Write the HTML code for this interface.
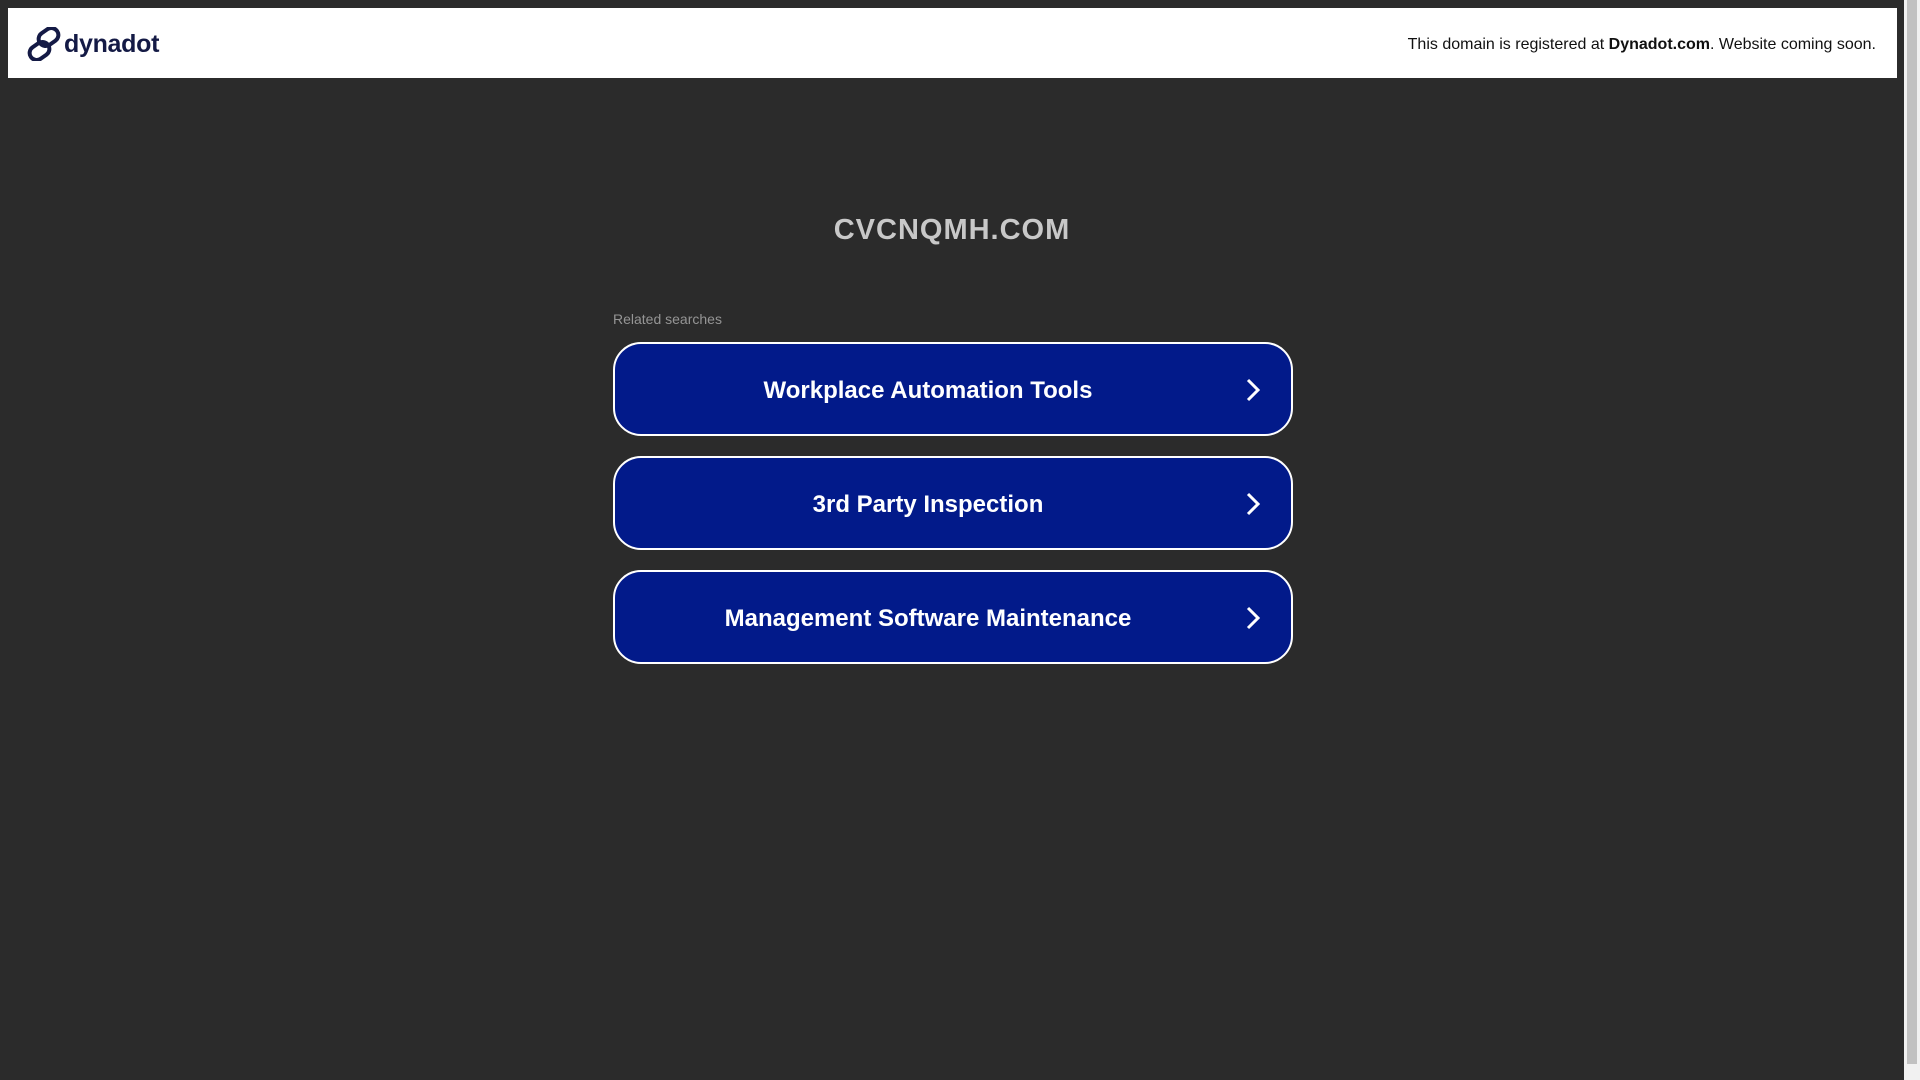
<!DOCTYPE html>
<html><head><meta charset="utf-8"><style>
html,body{margin:0;padding:0;width:1920px;height:1080px;overflow:hidden;background:#2b2b2b;font-family:"Liberation Sans",sans-serif;}
.header{position:absolute;left:8px;top:8px;width:1889px;height:70px;background:#fff;}
.logo{position:absolute;left:19px;top:19px;display:flex;align-items:center;}
.logo span{font-weight:bold;font-size:25px;color:#141a45;margin-left:3px;letter-spacing:-0.3px;}
.reg{position:absolute;right:21px;top:28px;font-size:16px;color:#111;}
.sb{position:absolute;left:1904px;top:0;width:16px;height:1080px;background:#f1f1f1;}
.thumb{position:absolute;left:1907px;top:0;width:10px;height:1064px;background:#c1c1c1;}
.title{position:absolute;left:0;width:1904px;top:214px;text-align:center;font-size:29px;font-weight:bold;color:#c8c8c8;letter-spacing:1px;}
.rel{position:absolute;left:613px;top:311px;font-size:14px;color:#959595;}
.btn{position:absolute;left:613px;width:676px;height:90px;border:2px solid #fff;border-radius:28px;background:#021a8a;color:#fff;font-size:24px;font-weight:bold;box-sizing:content-box;}
.btn .t{position:absolute;left:0;right:50px;top:2px;line-height:90px;text-align:center;}
.btn svg{position:absolute;right:30px;top:34px;}
</style></head><body>
<div class="header">
 <div class="logo">
  <svg width="34" height="34" viewBox="0 0 34 34" fill="none" stroke="#141a45" stroke-width="4">
   <rect x="11" y="3" width="21" height="14" rx="7" transform="rotate(-35 21.5 10)"/>
   <rect x="2" y="17" width="21" height="14" rx="7" transform="rotate(-35 12.5 24)"/>
  </svg>
  <span>dynadot</span>
 </div>
 <div class="reg">This domain is registered at <b>Dynadot.com</b>. Website coming soon.</div>
</div>
<div class="sb"></div><div class="thumb"></div>
<div class="title">CVCNQMH.COM</div>
<div class="rel">Related searches</div>
<div class="btn" style="top:342px"><div class="t">Workplace Automation Tools</div><svg width="16" height="24" viewBox="0 0 16 24"><path d="M3 2 L13 12 L3 22" stroke="#fff" stroke-width="3" fill="none"/></svg></div>
<div class="btn" style="top:456px"><div class="t">3rd Party Inspection</div><svg width="16" height="24" viewBox="0 0 16 24"><path d="M3 2 L13 12 L3 22" stroke="#fff" stroke-width="3" fill="none"/></svg></div>
<div class="btn" style="top:570px"><div class="t">Management Software Maintenance</div><svg width="16" height="24" viewBox="0 0 16 24"><path d="M3 2 L13 12 L3 22" stroke="#fff" stroke-width="3" fill="none"/></svg></div>
</body></html>
